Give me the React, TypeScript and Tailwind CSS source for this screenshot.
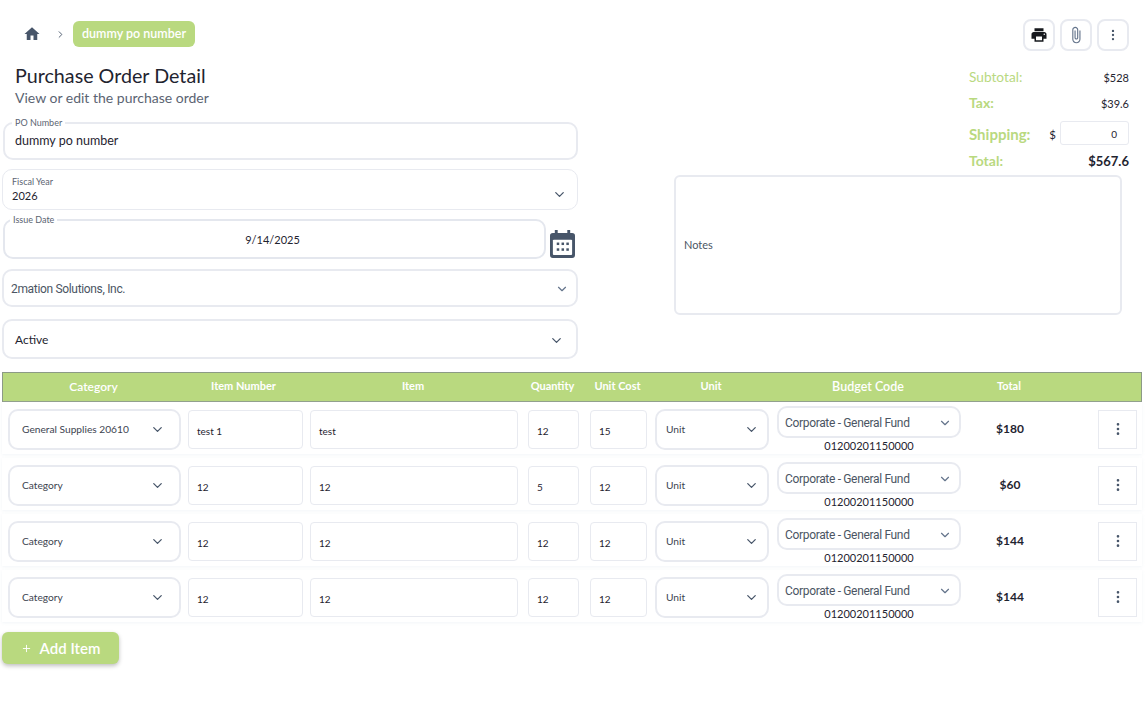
import React from "react";
import { ChevronDown, ChevronRight, EllipsisVertical, Plus } from "lucide-react";

const GREEN = "text-[#b9d97f]";

function Home() {
  return (
    <svg viewBox="0 0 24 24" className="w-[18px] h-[18px] fill-[#475569]">
      <path d="M10 20v-6h4v6h5v-8h3L12 3 2 12h3v8z" />
    </svg>
  );
}
function Printer() {
  return (
    <svg viewBox="0 0 24 24" className="w-[18px] h-[18px] fill-[#16181d]">
      <path d="M19 8H5c-1.66 0-3 1.34-3 3v6h4v4h12v-4h4v-6c0-1.66-1.34-3-3-3zm-3 11H8v-5h8v5zm3-7c-.55 0-1-.45-1-1s.45-1 1-1 1 .45 1 1-.45 1-1 1zm-1-9H6v4h12V3z" />
    </svg>
  );
}
function Clip() {
  return (
    <svg viewBox="0 0 24 24" className="w-[18px] h-[18px] fill-[#64748b]">
      <path d="M16.5 6v11.5c0 2.21-1.79 4-4 4s-4-1.79-4-4V5c0-1.38 1.12-2.5 2.5-2.5s2.5 1.12 2.5 2.5v10.5c0 .55-.45 1-1 1s-1-.45-1-1V6H10v9.5c0 1.38 1.12 2.5 2.5 2.5s2.5-1.12 2.5-2.5V5c0-2.21-1.79-4-4-4S7 2.79 7 5v12.5c0 3.04 2.46 5.5 5.5 5.5s5.5-2.46 5.5-5.5V6h-1.5z" />
    </svg>
  );
}
function Calendar() {
  return (
    <svg viewBox="0 0 26 30" className="w-[25px] h-[29px]">
      <path fill="#475569" d="M5 1h3v3h10V1h3v3h2a3 3 0 0 1 3 3v20a3 3 0 0 1-3 3H3a3 3 0 0 1-3-3V7a3 3 0 0 1 3-3h2z" />
      <rect x="3" y="11" width="20" height="16" rx="1" fill="#fff" />
      {[7, 12, 17].map((x) => (
        <g key={x} fill="#475569">
          <rect x={x} y="14" width="2.6" height="2.6" />
          <rect x={x} y="20" width="2.6" height="2.6" />
        </g>
      ))}
    </svg>
  );
}

function TopButton({ children }: { children: React.ReactNode }) {
  return (
    <div className="w-[32px] h-[32px] rounded-lg border-2 border-[#e8eaf0] flex items-center justify-center bg-white">
      {children}
    </div>
  );
}

function Legend({ text, className }: { text: string; className: string }) {
  return (
    <span className={`absolute bg-white px-[3px] text-[9px] leading-[11px] text-[#5b6472] ${className}`}>
      {text}
    </span>
  );
}

function Summary({ label, value, labelClass, valueClass }: { label: string; value: string; labelClass: string; valueClass: string }) {
  return (
    <div className="flex items-center justify-between h-[26px]">
      <span className={`${GREEN} ${labelClass}`}>{label}</span>
      <span className={valueClass}>{value}</span>
    </div>
  );
}

const rows = [
  { cat: "General Supplies 20610", num: "test 1", item: "test", qty: "12", cost: "15", total: "$180" },
  { cat: "Category", num: "12", item: "12", qty: "5", cost: "12", total: "$60" },
  { cat: "Category", num: "12", item: "12", qty: "12", cost: "12", total: "$144" },
  { cat: "Category", num: "12", item: "12", qty: "12", cost: "12", total: "$144" },
];

function Cell({ text, className }: { text: string; className: string }) {
  return (
    <div className={`h-[39px] rounded-[4px] border border-[#e8eaf0] flex items-center pl-[8px] pt-[4px] text-[10px] text-[#1f2430] ${className}`}>
      {text}
    </div>
  );
}

function RowSelect({ text, className }: { text: string; className: string }) {
  return (
    <div className={`h-[41px] rounded-[10px] border-2 border-[#e8eaf0] flex items-center justify-between pt-[2px] text-[10.2px] text-[#3d4450] ${className}`}>
      <span>{text}</span>
      <ChevronDown size={15} className="text-[#475569] mb-[1px]" />
    </div>
  );
}

export default function App() {
  return (
    <div className="w-[1145px] h-[719px] bg-white overflow-hidden px-[2px] pt-[21px] text-[#1f2430]" style={{ fontFamily: "Lato, 'Noto Sans', sans-serif" }}>
      <div className="flex h-[342px]">
        <div className="w-[576px] shrink-0">
          <div className="flex items-center h-[26px] pl-[21px]">
            <Home />
            <ChevronRight size={11} className="ml-[14px] text-[#475569]" />
            <span className="ml-[7px] h-[26px] px-[9px] rounded-md bg-[#b9d97f] text-white text-[12.5px] font-semibold flex items-center">
              dummy po number
            </span>
          </div>
          <h1 className="ml-[13px] mt-[15px] text-[19.7px] leading-[27px] text-[#1f2430]">Purchase Order Detail</h1>
          <p className="ml-[13px] text-[14px] leading-[18px] text-[#5b6472]">View or edit the purchase order</p>

          <div className="relative mt-[15px] ml-[1px] h-[38px] rounded-[10px] border-2 border-[#e8eaf0] flex items-center pl-[10px] pt-[1px] text-[12.5px]">
            <Legend text="PO Number" className="left-[7px] top-[-7px]" />
            dummy po number
          </div>
          <div className="mt-[9px] h-[41px] rounded-[10px] border border-[#e8eaf0] flex items-center justify-between pl-[9px] pr-[10px]">
            <div className="flex flex-col">
              <span className="text-[9px] leading-[12px] text-[#5b6472]">Fiscal Year</span>
              <span className="text-[11px] leading-[16px]">2026</span>
            </div>
            <ChevronDown size={15} className="mt-[10px] text-[#475569]" />
          </div>
          <div className="mt-[9px] ml-[1px] flex items-center">
            <div className="relative w-[543px] h-[40px] rounded-[10px] border-2 border-[#e4e7ee] flex items-center justify-center pr-[4px] pt-[2px] text-[11px]">
              <Legend text="Issue Date" className="left-[5px] top-[-7px]" />
              9/14/2025
            </div>
            <div className="ml-[4px] mt-[9px] flex">
              <Calendar />
            </div>
          </div>
          <div className="mt-[10px] h-[38px] rounded-[10px] border-2 border-[#e8eaf0] flex items-center justify-between pl-[7px] pr-[7px] pt-[1px] text-[12px] tracking-[-0.33px] text-[#4b5563]" style={{ fontFamily: "Roboto, sans-serif" }}>
            2mation Solutions, Inc.
            <ChevronDown size={14} className="text-[#64748b]" />
          </div>
          <div className="mt-[12px] h-[40px] rounded-[10px] border-2 border-[#e8eaf0] flex items-center justify-between pl-[11px] pr-[12px] pt-[2px] text-[12px]">
            Active
            <ChevronDown size={15} className="text-[#475569]" />
          </div>
        </div>

        <div className="ml-[96px] w-[455px] shrink-0 flex flex-col">
          <div className="flex justify-end gap-[5px] mt-[-2px]">
            <TopButton><Printer /></TopButton>
            <TopButton><Clip /></TopButton>
            <TopButton><EllipsisVertical size={14} className="text-[#475569]" /></TopButton>
          </div>
          <div className="ml-[295px] mt-[14px]">
            <Summary label="Subtotal:" value="$528" labelClass="text-[13.7px] mb-[2px]" valueClass="text-[11px]" />
            <Summary label="Tax:" value="$39.6" labelClass="text-[14px] font-bold mb-[3px]" valueClass="text-[11px]" />
            <div className="flex items-center h-[32px]">
              <span className={`${GREEN} text-[15px] font-bold mt-[2px]`}>Shipping:</span>
              <span className="ml-auto mt-[3px] text-[11.5px]">$</span>
              <div className="ml-[4px] w-[69px] h-[24px] border border-[#e8eaf0] rounded-[3px] flex items-end justify-end pr-[11px] pb-[2px] text-[10px]">0</div>
            </div>
            <Summary label="Total:" value="$567.6" labelClass="text-[14px] font-bold mb-[4px]" valueClass="text-[13px] font-bold" />
          </div>
          <div className="mt-0 w-[448px] h-[140px] rounded-[6px] border-2 border-[#e8eaf0] flex items-center pl-[8px] text-[11px] text-[#4b5563]">
            Notes
          </div>
        </div>
      </div>

      <div className="mt-[9px] w-[1140px] h-[30px] bg-[#b9d97f] border border-[#8c9a86] flex items-center pb-[1px] text-white text-[11px] font-bold text-center">
        <span className="w-[181px] text-[12px] font-semibold">Category</span>
        <span className="w-[119px]">Item Number</span>
        <span className="ml-[6px] w-[208px]">Item</span>
        <span className="ml-[10px] w-[51px]">Quantity</span>
        <span className="ml-[11px] w-[57px]">Unit Cost</span>
        <span className="ml-[8px] w-[114px]">Unit</span>
        <span className="ml-[8px] mt-[2px] w-[184px] text-[12.5px] font-semibold">Budget Code</span>
        <span className="ml-[8px] w-[82px]">Total</span>
      </div>

      <div className="w-[1140px]">
        {rows.map((r, i) => (
          <div key={i} className="h-[52px] mb-[4px] pt-[2px] flex items-center pl-[6px] shadow-[0_1px_3px_rgba(226,232,240,0.45)]">
            <RowSelect text={r.cat} className="w-[173px] pl-[12px] pr-[14px]" />
            <Cell text={r.num} className="ml-[7px] w-[115px]" />
            <Cell text={r.item} className="ml-[7px] w-[208px]" />
            <Cell text={r.qty} className="ml-[10px] w-[51px]" />
            <Cell text={r.cost} className="ml-[11px] w-[57px]" />
            <RowSelect text="Unit" className="ml-[8px] w-[114px] pl-[9px] pr-[8px]" />
            <div className="ml-[8px] w-[184px] flex flex-col items-center self-start mt-[2px]">
              <div className="w-full h-[32px] rounded-[10px] border-2 border-[#e8eaf0] flex items-center justify-between pl-[6px] pr-[7px] pt-[1px] text-[12px] tracking-[-0.33px] text-[#4b5563]" style={{ fontFamily: "Roboto, sans-serif" }}>
                Corporate - General Fund
                <ChevronDown size={14} className="text-[#64748b]" />
              </div>
              <span className="text-[11px] leading-[16px]">01200201150000</span>
            </div>
            <div className="w-[82px] ml-[8px] text-center text-[12px] font-bold">{r.total}</div>
            <div className="ml-[47px] w-[39px] h-[39px] border border-[#e8eaf0] flex items-center justify-center">
              <EllipsisVertical size={16} className="text-[#475569]" />
            </div>
          </div>
        ))}
      </div>

      <div className="mt-[10px] w-[117px] h-[32px] rounded-md bg-[#b9d97f] text-white text-[15px] font-semibold flex items-center justify-center gap-[8px] shadow-[0_2px_4px_rgba(0,0,0,0.25)]">
        <Plus size={11} />
        Add Item
      </div>
    </div>
  );
}
